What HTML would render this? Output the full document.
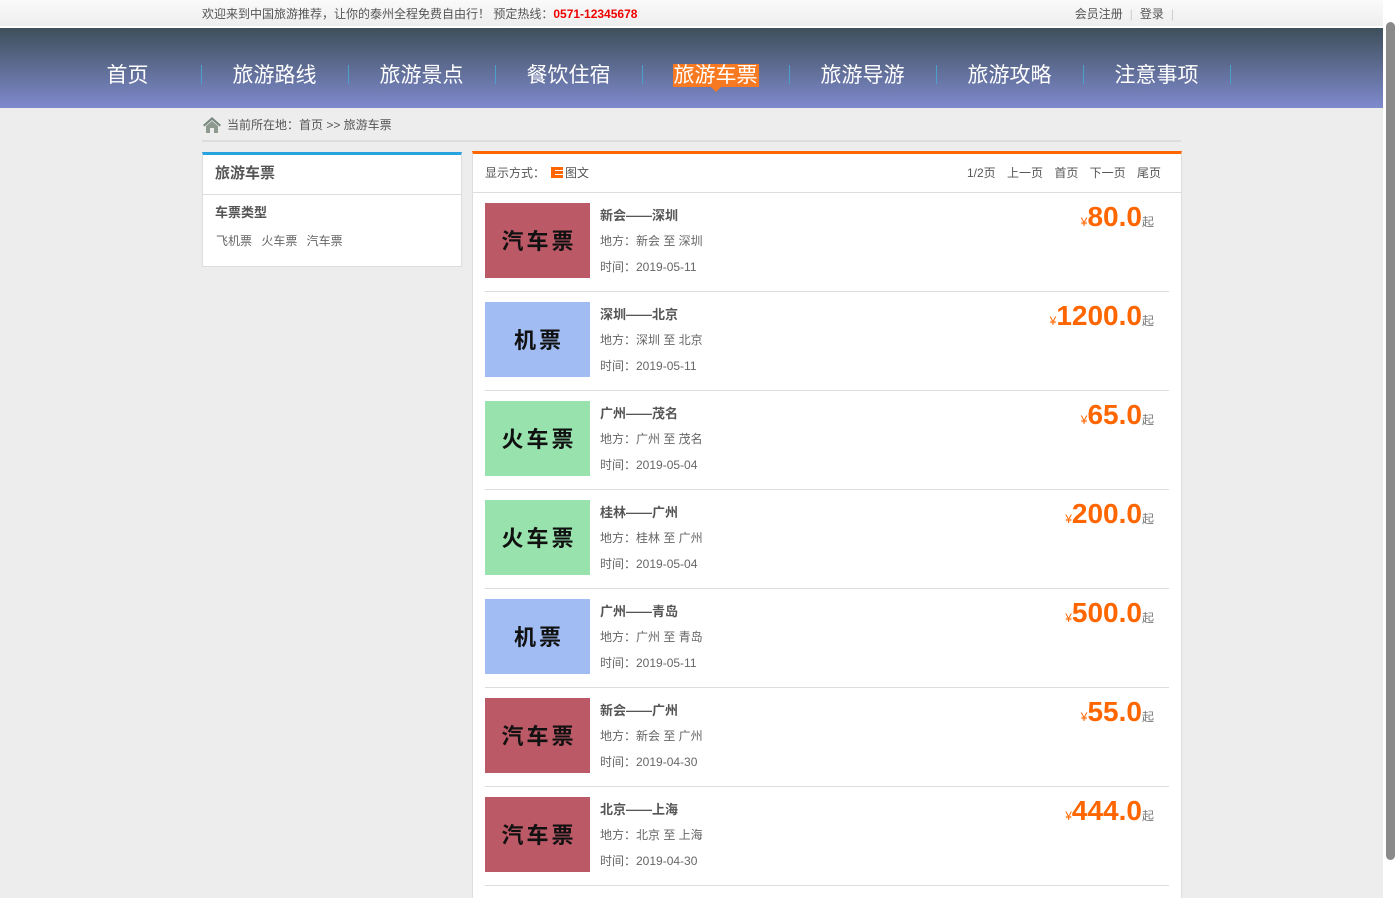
<!DOCTYPE html>
<html><head><meta charset="utf-8"><style>
*{margin:0;padding:0;box-sizing:border-box}
html{overflow:hidden;height:898px}
body{width:1398px;height:898px;overflow:hidden;background:#ededed;font-family:"Liberation Sans","Noto Sans CJK SC",sans-serif;color:#555;position:relative}
.top{position:absolute;left:0;top:0;width:1383px;height:28px;background:linear-gradient(#fafafa,#eee);border-bottom:2px solid #fff;font-size:12px;color:#555}
.top .l{position:absolute;left:202px;top:5px}
.top .l b{color:#e00;font-weight:bold}
.top .r{position:absolute;right:202px;top:5px}
.top .r i{font-style:normal;color:#ccc;margin:0 7px}
.nav{position:absolute;left:0;top:28px;width:1383px;height:80px;background:linear-gradient(#3f4f5b,#7e8acd)}
.nav a{position:absolute;top:35px;width:147px;text-align:center;color:#fff;font-size:21px;line-height:26px}
.nav s{position:absolute;top:37px;width:1px;height:19px;background:#4aa0c8}
.cur span{background:#f77a22;padding:0 1px;position:relative}
.cur span:after{content:"";position:absolute;left:50%;margin-left:-5px;bottom:-5px;border:5px solid transparent;border-bottom:0;border-top-color:#f77a22}
.bc{position:absolute;left:202px;top:113px;width:979px;height:29px;border-bottom:2px solid #ddd;font-size:12px;color:#555}
.bc span{position:absolute;left:25px;top:3px}
.lb{position:absolute;left:202px;top:152px;width:260px;height:115px;background:#fff;border:1px solid #ddd;border-top:3px solid #29a3de}
.lb h3{font-size:15px;height:40px;line-height:38px;padding-left:12px;border-bottom:1px solid #ddd;color:#555}
.lb h4{font-size:13px;padding:7px 0 0 12px;color:#555}
.lb p{font-size:12px;padding:11px 0 0 13px;color:#666;word-spacing:6px}
.rb{position:absolute;left:472px;top:151px;width:710px;height:750px;background:#fff;border:1px solid #ddd;border-top:3px solid #f60}
.hd{height:39px;border-bottom:1px solid #ddd;font-size:12px;position:relative}
.hd .l{position:absolute;left:12px;top:10px}
.hd .l em{font-style:normal;display:inline-block;width:12px;height:11px;margin:0 2px 0 6px;vertical-align:-1px;background:repeating-linear-gradient(#f60 0 3px,#fff 3px 4px);box-shadow:inset 4px 0 #f60}
.hd .r{position:absolute;right:20px;top:10px;word-spacing:8px}
.it{position:absolute;left:12px;width:684px;height:99px;border-bottom:1px solid #ddd}
.im{position:absolute;left:0;top:10px;width:105px;height:75px;font-family:"Noto Sans CJK SC",sans-serif;font-weight:bold;font-size:22px;color:#111;text-align:center;line-height:75px;letter-spacing:3px;text-indent:3px}
.c1{background:#bb5967}.c2{background:#a0bcf3}.c3{background:#98e2ad}
.t{position:absolute;left:115px;top:12px;font-size:13px;font-weight:bold;color:#555}
.a{position:absolute;left:115px;top:39px;font-size:12px;color:#666}
.d{position:absolute;left:115px;top:65px;font-size:12px;color:#666}
.p{position:absolute;right:15px;top:8px;color:#f60;font-weight:bold;font-size:28px;white-space:nowrap}
.p small{font-size:12px;font-weight:normal}
.p i{font-style:normal;font-size:12px;color:#777;font-weight:normal}
.sb{position:absolute;left:1383px;top:0;width:15px;height:898px;background:#fff}
.sb div{position:absolute;left:3px;top:22px;width:9px;height:838px;background:#8a8a8a;border-radius:5px}
</style></head><body>
<div class="top"><div class="l">欢迎来到中国旅游推荐，让你的泰州全程免费自由行！ 预定热线：<b>0571-12345678</b></div><div class="r">会员注册<i>|</i>登录<i>|</i></div></div>
<div class="nav">
<a style="left:54px">首页</a><s style="left:201px"></s>
<a style="left:201px">旅游路线</a><s style="left:348px"></s>
<a style="left:348px">旅游景点</a><s style="left:495px"></s>
<a style="left:495px">餐饮住宿</a><s style="left:642px"></s>
<a style="left:642px" class="cur"><span>旅游车票</span></a><s style="left:789px"></s>
<a style="left:789px">旅游导游</a><s style="left:936px"></s>
<a style="left:936px">旅游攻略</a><s style="left:1083px"></s>
<a style="left:1083px">注意事项</a><s style="left:1230px"></s>
</div>
<div class="bc"><svg width="20" height="20" viewBox="0 0 20 20" style="position:absolute;left:0;top:1px"><path d="M1 11L10 3l9 8-1.5 1.5L10 6 2.5 12.5z" fill="#7a8a80"/><path d="M4 12l6-5 6 5v7h-4v-5H8v5H4z" fill="#8c9a90"/></svg><span>当前所在地：首页 &gt;&gt; 旅游车票</span></div>
<div class="lb"><h3>旅游车票</h3><h4>车票类型</h4><p>飞机票 火车票 汽车票</p></div>
<div class="rb">
<div class="hd"><div class="l">显示方式：<em></em>图文</div><div class="r">1/2页 上一页 首页 下一页 尾页</div></div>
<div class="it" style="top:39px"><div class="im c1">汽车票</div><div class="t">新会——深圳</div><div class="a">地方：新会 至 深圳</div><div class="d">时间：2019-05-11</div><div class="p"><small>¥</small>80.0<i>起</i></div></div>
<div class="it" style="top:138px"><div class="im c2">机票</div><div class="t">深圳——北京</div><div class="a">地方：深圳 至 北京</div><div class="d">时间：2019-05-11</div><div class="p"><small>¥</small>1200.0<i>起</i></div></div>
<div class="it" style="top:237px"><div class="im c3">火车票</div><div class="t">广州——茂名</div><div class="a">地方：广州 至 茂名</div><div class="d">时间：2019-05-04</div><div class="p"><small>¥</small>65.0<i>起</i></div></div>
<div class="it" style="top:336px"><div class="im c3">火车票</div><div class="t">桂林——广州</div><div class="a">地方：桂林 至 广州</div><div class="d">时间：2019-05-04</div><div class="p"><small>¥</small>200.0<i>起</i></div></div>
<div class="it" style="top:435px"><div class="im c2">机票</div><div class="t">广州——青岛</div><div class="a">地方：广州 至 青岛</div><div class="d">时间：2019-05-11</div><div class="p"><small>¥</small>500.0<i>起</i></div></div>
<div class="it" style="top:534px"><div class="im c1">汽车票</div><div class="t">新会——广州</div><div class="a">地方：新会 至 广州</div><div class="d">时间：2019-04-30</div><div class="p"><small>¥</small>55.0<i>起</i></div></div>
<div class="it" style="top:633px"><div class="im c1">汽车票</div><div class="t">北京——上海</div><div class="a">地方：北京 至 上海</div><div class="d">时间：2019-04-30</div><div class="p"><small>¥</small>444.0<i>起</i></div></div>
</div>
<div class="sb"><div></div></div>
</body></html>
